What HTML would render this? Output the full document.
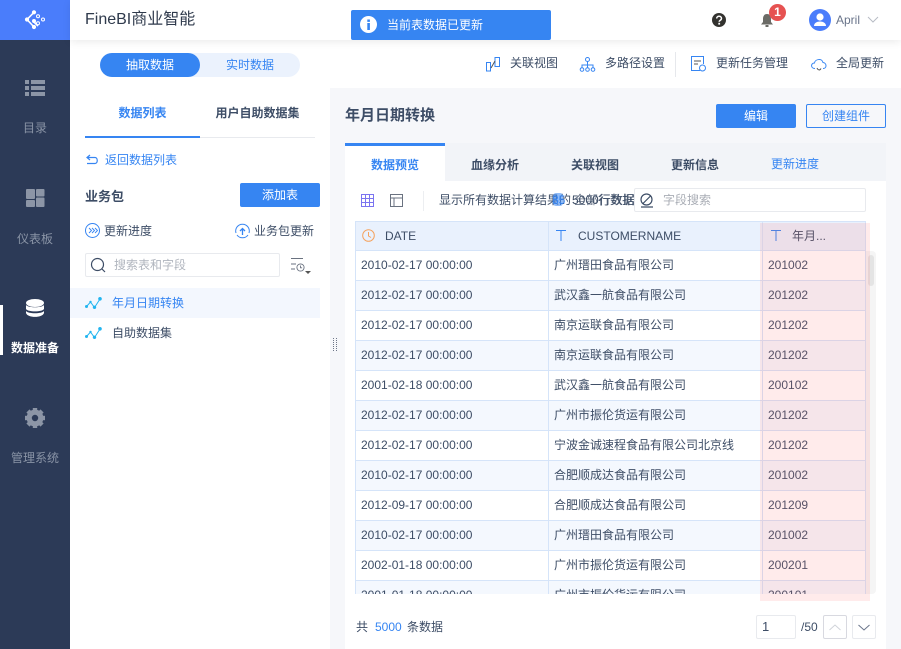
<!DOCTYPE html>
<html lang="zh"><head><meta charset="utf-8"><title>FineBI</title>
<style>
*{box-sizing:border-box;margin:0;padding:0}
html,body{width:901px;height:649px;overflow:hidden;background:#fff}
body{position:relative;font-family:"Liberation Sans","Noto Sans CJK SC",sans-serif;font-size:12px;color:#3d4d66}
.a{position:absolute;white-space:nowrap;line-height:16px}
.b{font-weight:bold}
.blue{color:#3685f2}
svg{position:absolute;overflow:visible}
.cell{position:absolute;height:30px;line-height:29px;white-space:nowrap;padding-left:6px}
</style></head><body>

<!-- right panel -->
<div class="a" style="left:330px;top:88px;width:571px;height:561px;background:#f6f7fa"></div>
<div class="a" style="left:345px;top:143px;width:541px;height:506px;background:#fff"></div>
<div class="a" style="left:345px;top:143px;width:541px;height:38px;background:#f2f4f8"></div>
<div class="a" style="left:345px;top:143px;width:100px;height:38px;background:#fff;border-top:3px solid #3685f2"></div>

<!-- sidebar -->
<div class="a" style="left:0;top:0;width:70px;height:649px;background:#2c3a57"></div>
<div class="a" style="left:0;top:0;width:70px;height:40px;background:#4a7dfb"></div>
<svg style="left:25px;top:10px" width="20" height="20" viewBox="0 0 20 20" fill="#fff"><path d="M2 9.500L9 2.300M2 9.500L9 17M9 12l4 4" stroke="#fff" stroke-width="1.600" fill="none"/><circle cx="9" cy="2.300" r="2.100"/><circle cx="2" cy="9.500" r="2.100"/><circle cx="9" cy="17" r="2.100"/><circle cx="9" cy="11" r="2"/><circle cx="13" cy="6.300" r="1.500" fill="none" stroke="#fff"/><circle cx="18" cy="9.500" r="1.500" fill="none" stroke="#fff"/><circle cx="13" cy="13.300" r="1.500" fill="none" stroke="#fff"/></svg>
<!-- list icon -->
<svg style="left:25px;top:80px" width="20" height="16" fill="#8c95a6"><rect width="4" height="4" y="0"/><rect x="6" width="14" height="4" y="0"/><rect width="4" height="4" y="6"/><rect x="6" width="14" height="4" y="6"/><rect width="4" height="4" y="12"/><rect x="6" width="14" height="4" y="12"/></svg>
<div class="a" style="left:23px;top:120px;color:#8a94a6">目录</div>
<!-- dash icon -->
<svg style="left:26px;top:189px" width="19" height="18" fill="#8c95a6"><rect width="9" height="10" rx="1"/><rect x="10" width="8.500" height="7.500" rx="1"/><rect y="11" width="9" height="7" rx="1"/><rect x="10" y="8.500" width="8.500" height="9.500" rx="1"/></svg>
<div class="a" style="left:17px;top:231px;color:#8a94a6">仪表板</div>
<!-- db icon -->
<div class="a" style="left:0;top:305px;width:3px;height:50px;background:#fff"></div>
<svg style="left:26px;top:299px" width="18" height="18" fill="#fff"><ellipse cx="9" cy="4" rx="9" ry="4"/><path d="M0 6c2 3 16 3 18 0v4c-1.500 3.200-16.500 3.200-18 0z"/><path d="M0 12c2 3 16 3 18 0v2c-1.500 5.200-16.500 5.200-18 0z"/></svg>
<div class="a b" style="left:11px;top:340px;color:#fff">数据准备</div>
<!-- gear -->
<svg style="left:25px;top:408px" width="20" height="20" viewBox="0 0 20 20"><circle cx="10" cy="10" r="5.800" fill="none" stroke="#8c95a6" stroke-width="5.200"/><g fill="#8c95a6"><rect x="7.800" y="0" width="4.400" height="4"/><rect x="7.800" y="16" width="4.400" height="4"/><rect x="0" y="7.800" width="4" height="4.400"/><rect x="16" y="7.800" width="4" height="4.400"/><rect x="7.800" y="0" width="4.400" height="4" transform="rotate(45 10 10)"/><rect x="7.800" y="16" width="4.400" height="4" transform="rotate(45 10 10)"/><rect x="0" y="7.800" width="4" height="4.400" transform="rotate(45 10 10)"/><rect x="16" y="7.800" width="4" height="4.400" transform="rotate(45 10 10)"/></g></svg>
<div class="a" style="left:11px;top:450px;color:#8a94a6">管理系统</div>

<!-- top bar -->
<div class="a" style="left:70px;top:0;width:831px;height:40px;background:#fff;box-shadow:0 2px 8px rgba(0,0,0,.08)"></div>
<div class="a" style="left:85px;top:9px;font-size:16px;line-height:22px;color:#2f3a4c">FineBI商业智能</div>
<div class="a" style="left:351px;top:10px;width:200px;height:30px;background:#3685f2;border-radius:2px"></div>
<svg style="left:360px;top:16px" width="18" height="18"><circle cx="8.500" cy="8.500" r="8.500" fill="#fff"/><rect x="7.300" y="7" width="2.600" height="7" fill="#3685f2"/><rect x="7.300" y="3.500" width="2.600" height="2.400" fill="#3685f2"/></svg>
<div class="a" style="left:387px;top:17px;color:#fff">当前表数据已更新</div>
<!-- help -->
<svg style="left:712px;top:13px" width="14" height="14"><circle cx="7" cy="7" r="7" fill="#33322f"/><path d="M4.700 5.500c0-3 4.800-3 4.800 0 0 1.800-2.300 1.600-2.300 3.200" fill="none" stroke="#fff" stroke-width="1.500"/><rect x="6.300" y="9.800" width="1.800" height="1.800" fill="#fff"/></svg>
<!-- bell -->
<svg style="left:761px;top:14px" width="12" height="13" fill="#6b6b66"><path d="M6 0c3 0 4 2.500 4 5v3l2 2.500H0L2 8V5c0-2.500 1-5 4-5z"/><rect x="4.500" y="11" width="3" height="2"/></svg>
<div class="a" style="left:769px;top:4px;width:17px;height:17px;border-radius:50%;background:#e65251;color:#fff;text-align:center;line-height:17px;font-weight:bold">1</div>
<svg style="left:809px;top:9px" width="22" height="22"><circle cx="11" cy="11" r="11" fill="#4a7dfb"/><circle cx="11" cy="8" r="3.600" fill="#fff"/><path d="M5 17c0-6 12-6 12 0z" fill="#fff"/></svg>
<div class="a" style="left:836px;top:12px;color:#69748a">April</div>
<svg style="left:867px;top:16px" width="12" height="8"><path d="M1 1l5 5 5-5" fill="none" stroke="#b8bcc5"/></svg>

<!-- toggle -->
<div class="a" style="left:100px;top:53px;width:200px;height:24px;border-radius:12px;background:#ebf2fd"></div>
<div class="a" style="left:100px;top:53px;width:100px;height:24px;border-radius:12px;background:#3685f2;color:#fff;text-align:center;line-height:24px">抽取数据</div>
<div class="a blue" style="left:200px;top:53px;width:100px;height:24px;text-align:center;line-height:24px">实时数据</div>

<!-- top actions -->
<svg style="left:486px;top:57px" width="14" height="14" fill="none" stroke="#3685f2"><rect x=".5" y="5.500" width="4" height="8.500"/><rect x="9" y=".5" width="4.500" height="9"/><path d="M5 11l4-7" stroke="#555"/></svg>
<div class="a" style="left:510px;top:55px">关联视图</div>
<svg style="left:580px;top:57px" width="15" height="15" fill="none" stroke="#3685f2"><circle cx="7.500" cy="2.500" r="2"/><circle cx="2" cy="12.500" r="1.800"/><circle cx="7.500" cy="12.500" r="1.800"/><circle cx="13" cy="12.500" r="1.800"/><path d="M7.500 4.500v6M2 10.500V8h11v2.500"/></svg>
<div class="a" style="left:605px;top:55px">多路径设置</div>
<div class="a" style="left:675px;top:52px;width:1px;height:25px;background:#e6e8ec"></div>
<svg style="left:691px;top:56px" width="15" height="16" fill="none" stroke="#3685f2"><path d="M9 14.500H.5V.5h12V8"/><path d="M3 5h7M3 8h4" stroke="#555"/><circle cx="11.500" cy="12" r="3"/></svg>
<div class="a" style="left:716px;top:55px">更新任务管理</div>
<svg style="left:811px;top:58px" width="16" height="14" fill="none" stroke="#3685f2"><path d="M4 10.500C-.5 10.500-.5 5 3.500 5 4 1 11 0 12 4.500c4 .5 4 6 0 6"/><path d="M6 10c1 2.500 3 2.500 4 .5" stroke="#555"/></svg>
<div class="a" style="left:836px;top:55px">全局更新</div>

<!-- left panel tabs -->
<div class="a b blue" style="left:85px;top:105px;width:115px;text-align:center">数据列表</div>
<div class="a b" style="left:200px;top:105px;width:115px;text-align:center;color:#3d4d66">用户自助数据集</div>
<div class="a" style="left:85px;top:137px;width:230px;height:1px;background:#e8eaee"></div>
<div class="a" style="left:85px;top:136px;width:115px;height:2px;background:#3685f2"></div>
<svg style="left:86px;top:154px" width="13" height="11" fill="none" stroke="#3685f2" stroke-width="1.200"><path d="M4 1L1 3.500 4 6M1 3.500h8c3 0 3 6 0 6H1"/></svg>
<div class="a blue" style="left:105px;top:152px">返回数据列表</div>
<div class="a b" style="left:85px;top:189px;font-size:13px;color:#3d4d66">业务包</div>
<div class="a" style="left:240px;top:183px;width:80px;height:24px;background:#3685f2;border-radius:2px;color:#fff;text-align:center;line-height:24px">添加表</div>
<svg style="left:85px;top:223px" width="15" height="15" fill="none" stroke="#3685f2"><circle cx="7.500" cy="7.500" r="7"/><path d="M4 5l2.500 2.500L4 10M7 5l2.500 2.500L7 10M10 5l2.500 2.500L10 10" stroke-width=".9"/></svg>
<div class="a" style="left:104px;top:223px">更新进度</div>
<svg style="left:235px;top:224px" width="15" height="15" fill="none" stroke="#3685f2"><path d="M1 9A6.800 6.800 0 1 1 14 9M13 11a6.800 6.800 0 0 1-11 0"/><path d="M7.500 11V5M5 7l2.500-2.500L10 7" stroke-width="1.300"/></svg>
<div class="a" style="left:254px;top:223px">业务包更新</div>
<div class="a" style="left:85px;top:253px;width:195px;height:24px;border:1px solid #e8eaee;border-radius:2px"></div>
<svg style="left:91px;top:258px" width="15" height="15" fill="none" stroke="#3d4d66" stroke-width="1.200"><circle cx="6.500" cy="6.500" r="6"/><path d="M11 11l3 3"/></svg>
<div class="a" style="left:114px;top:257px;color:#b0b5be">搜索表和字段</div>
<svg style="left:291px;top:258px" width="20" height="17" fill="none" stroke="#6a7280" stroke-width=".9"><path d="M0 .5h12M0 6h5M0 11h4"/><circle cx="9.500" cy="9.500" r="3.600"/><path d="M9.500 7.500v2.300h1.600"/><path d="M14 13h6l-3 3z" fill="#555" stroke="none"/></svg>
<div class="a" style="left:70px;top:288px;width:250px;height:30px;background:#f3f7fe"></div>
<svg style="left:85px;top:297px" width="17" height="12" fill="none" stroke="#22b5f0"><path d="M1.500 9.500L5.500 5l4 5.500L15 2"/><g fill="#22b5f0" stroke="none"><circle cx="1.500" cy="9.500" r="1.500"/><circle cx="5.500" cy="5" r="1.200"/><circle cx="9.500" cy="10.300" r="1.700"/><circle cx="15" cy="1.800" r="1.800"/></g></svg>
<div class="a blue" style="left:112px;top:295px">年月日期转换</div>
<svg style="left:85px;top:327px" width="17" height="12" fill="none" stroke="#22b5f0"><path d="M1.500 9.500L5.500 5l4 5.500L15 2"/><g fill="#22b5f0" stroke="none"><circle cx="1.500" cy="9.500" r="1.500"/><circle cx="5.500" cy="5" r="1.200"/><circle cx="9.500" cy="10.300" r="1.700"/><circle cx="15" cy="1.800" r="1.800"/></g></svg>
<div class="a" style="left:112px;top:325px">自助数据集</div>
<svg style="left:333px;top:338px" width="5" height="14" fill="none" stroke="#6d7688"><path d="M.5 0v14M3.500 0v14" stroke-dasharray="1 1"/></svg>

<!-- right title -->
<div class="a b" style="left:345px;top:107px;font-size:15px;line-height:18px;color:#3d4d66">年月日期转换</div>
<div class="a b" style="left:716px;top:104px;width:80px;height:24px;background:#3685f2;border-radius:2px;color:#fff;text-align:center;line-height:24px;font-weight:normal">编辑</div>
<div class="a blue" style="left:806px;top:104px;width:80px;height:24px;border:1px solid #3685f2;border-radius:2px;text-align:center;line-height:22px">创建组件</div>

<!-- sub tabs -->
<div class="a b blue" style="left:345px;top:157px;width:100px;text-align:center">数据预览</div>
<div class="a b" style="left:445px;top:157px;width:100px;text-align:center">血缘分析</div>
<div class="a b" style="left:545px;top:157px;width:100px;text-align:center">关联视图</div>
<div class="a b" style="left:645px;top:157px;width:100px;text-align:center">更新信息</div>
<div class="a blue" style="left:745px;top:156px;width:100px;text-align:center">更新进度</div>

<!-- toolbar -->
<svg style="left:361px;top:194px" width="13" height="13" fill="none" stroke="#7b74f0"><path d="M.5.500h12v12H.5zM.5 4.500h12M.5 8.500h12M4.500.5v12M8.500.5v12"/></svg>
<svg style="left:390px;top:194px" width="13" height="13" fill="none" stroke="#6a7280"><path d="M.5.500h12v12H.5zM.5 4h12M4 4v8.500"/></svg>
<div class="a" style="left:423px;top:191px;width:1px;height:20px;background:#eceef1"></div>
<div class="a" style="left:439px;top:192px">显示所有数据计算结果的</div>
<div class="a" style="left:553px;top:193px;width:10px;height:13px;background:rgba(54,133,242,.55);border-radius:3px"></div>
<div class="a blue" style="left:552px;top:192px">85</div>
<div class="a" style="left:572px;top:192px">5000行数据</div>
<div class="a" style="left:574px;top:192px;opacity:.8">全部行数据</div>
<div class="a" style="left:634px;top:188px;width:232px;height:24px;background:#fff;border:1px solid #e8eaee;border-radius:2px"></div>
<svg style="left:640px;top:193px" width="14" height="15" fill="none" stroke="#3d4d66" stroke-width="1.200"><circle cx="6.500" cy="6.500" r="5.500"/><path d="M3 10.500L10.500 3M1 14h12"/></svg>
<div class="a" style="left:663px;top:192px;color:#a9adb5">字段搜索</div>

<!-- table -->
<div class="a" style="left:355px;top:221px;width:511px;height:373px;overflow:hidden;background:#fff">
<div class="a" style="left:0;top:0;width:511px;height:30px;background:#e9f1fd"></div>
<div class="a" style="left:0;top:60px;width:511px;height:30px;background:#f4f8fe"></div>
<div class="a" style="left:0;top:120px;width:511px;height:30px;background:#f4f8fe"></div>
<div class="a" style="left:0;top:180px;width:511px;height:30px;background:#f4f8fe"></div>
<div class="a" style="left:0;top:240px;width:511px;height:30px;background:#f4f8fe"></div>
<div class="a" style="left:0;top:300px;width:511px;height:30px;background:#f4f8fe"></div>
<div class="a" style="left:0;top:360px;width:511px;height:30px;background:#f4f8fe"></div>
<div class="a" style="left:0;top:0;width:511px;height:373px;background-image:linear-gradient(to bottom,#d5e4f9 1px,transparent 1px);background-size:511px 30px;background-position:0 -1px"></div>
<div class="a" style="left:0;top:0;width:511px;height:1px;background:#d5e4f9"></div>
<div class="a" style="left:0;top:0;width:1px;height:373px;background:#d5e4f9"></div>
<div class="a" style="left:193px;top:0;width:1px;height:373px;background:#d5e4f9"></div>
<div class="a" style="left:407px;top:0;width:1px;height:373px;background:#d5e4f9"></div>
<div class="a" style="left:510px;top:0;width:1px;height:373px;background:#d5e4f9"></div>

<svg style="left:7px;top:8px" width="13" height="13" fill="none" stroke="#f5a25d"><circle cx="6.500" cy="6.500" r="5.800"/><path d="M6.500 3v4l2.500 1.500"/></svg>
<div class="a" style="left:30px;top:7px">DATE</div>
<svg style="left:201px;top:9px" width="11" height="12" fill="none" stroke="#3685f2"><path d="M0 .5h10M5 .5V11"/></svg>
<div class="a" style="left:223px;top:7px">CUSTOMERNAME</div>
<svg style="left:416px;top:9px" width="11" height="12" fill="none" stroke="#3685f2"><path d="M0 .5h10M5 .5V11"/></svg>
<div class="a" style="left:437px;top:7px">年月...</div>

<div class="cell" style="left:0;top:30px">2010-02-17 00:00:00</div><div class="cell" style="left:193px;top:30px">广州瑨田食品有限公司</div><div class="cell" style="left:407px;top:30px">201002</div>
<div class="cell" style="left:0;top:60px">2012-02-17 00:00:00</div><div class="cell" style="left:193px;top:60px">武汉鑫一航食品有限公司</div><div class="cell" style="left:407px;top:60px">201202</div>
<div class="cell" style="left:0;top:90px">2012-02-17 00:00:00</div><div class="cell" style="left:193px;top:90px">南京运联食品有限公司</div><div class="cell" style="left:407px;top:90px">201202</div>
<div class="cell" style="left:0;top:120px">2012-02-17 00:00:00</div><div class="cell" style="left:193px;top:120px">南京运联食品有限公司</div><div class="cell" style="left:407px;top:120px">201202</div>
<div class="cell" style="left:0;top:150px">2001-02-18 00:00:00</div><div class="cell" style="left:193px;top:150px">武汉鑫一航食品有限公司</div><div class="cell" style="left:407px;top:150px">200102</div>
<div class="cell" style="left:0;top:180px">2012-02-17 00:00:00</div><div class="cell" style="left:193px;top:180px">广州市振伦货运有限公司</div><div class="cell" style="left:407px;top:180px">201202</div>
<div class="cell" style="left:0;top:210px">2012-02-17 00:00:00</div><div class="cell" style="left:193px;top:210px">宁波金诚速程食品有限公司北京线</div><div class="cell" style="left:407px;top:210px">201202</div>
<div class="cell" style="left:0;top:240px">2010-02-17 00:00:00</div><div class="cell" style="left:193px;top:240px">合肥顺成达食品有限公司</div><div class="cell" style="left:407px;top:240px">201002</div>
<div class="cell" style="left:0;top:270px">2012-09-17 00:00:00</div><div class="cell" style="left:193px;top:270px">合肥顺成达食品有限公司</div><div class="cell" style="left:407px;top:270px">201209</div>
<div class="cell" style="left:0;top:300px">2010-02-17 00:00:00</div><div class="cell" style="left:193px;top:300px">广州瑨田食品有限公司</div><div class="cell" style="left:407px;top:300px">201002</div>
<div class="cell" style="left:0;top:330px">2002-01-18 00:00:00</div><div class="cell" style="left:193px;top:330px">广州市振伦货运有限公司</div><div class="cell" style="left:407px;top:330px">200201</div>
<div class="cell" style="left:0;top:360px">2001-01-18 00:00:00</div><div class="cell" style="left:193px;top:360px">广州市振伦货运有限公司</div><div class="cell" style="left:407px;top:360px">200101</div>
</div>

<!-- scrollbar -->
<div class="a" style="left:866px;top:251px;width:10px;height:343px;background:#f5f5f5;border-radius:0 4px 4px 0"></div>
<div class="a" style="left:868px;top:255px;width:6px;height:31px;background:#e4e4e4;border-radius:3px"></div>
<!-- pink overlay -->
<div class="a" style="left:760px;top:223px;width:110px;height:378px;background:rgba(255,110,110,.14)"></div>

<!-- footer -->
<div class="a" style="left:356px;top:619px">共</div>
<div class="a blue" style="left:375px;top:619px">5000</div>
<div class="a" style="left:407px;top:619px">条数据</div>
<div class="a" style="left:756px;top:615px;width:40px;height:24px;border:1px solid #e8eaee;border-radius:2px;padding-left:5px;line-height:22px;font-size:13px">1</div>
<div class="a" style="left:801px;top:619px">/50</div>
<div class="a" style="left:823px;top:615px;width:24px;height:24px;border:1px solid #d8d9e0;border-radius:2px"></div>
<svg style="left:829px;top:624px" width="12" height="7"><path d="M.5 6l5.500-5 5.500 5" fill="none" stroke="#d0d3d9"/></svg>
<div class="a" style="left:852px;top:615px;width:24px;height:24px;border:1px solid #e8eaee;border-radius:2px"></div>
<svg style="left:858px;top:624px" width="12" height="7"><path d="M.5 1l5.500 5 5.500-5" fill="none" stroke="#69748a"/></svg>
</body></html>
